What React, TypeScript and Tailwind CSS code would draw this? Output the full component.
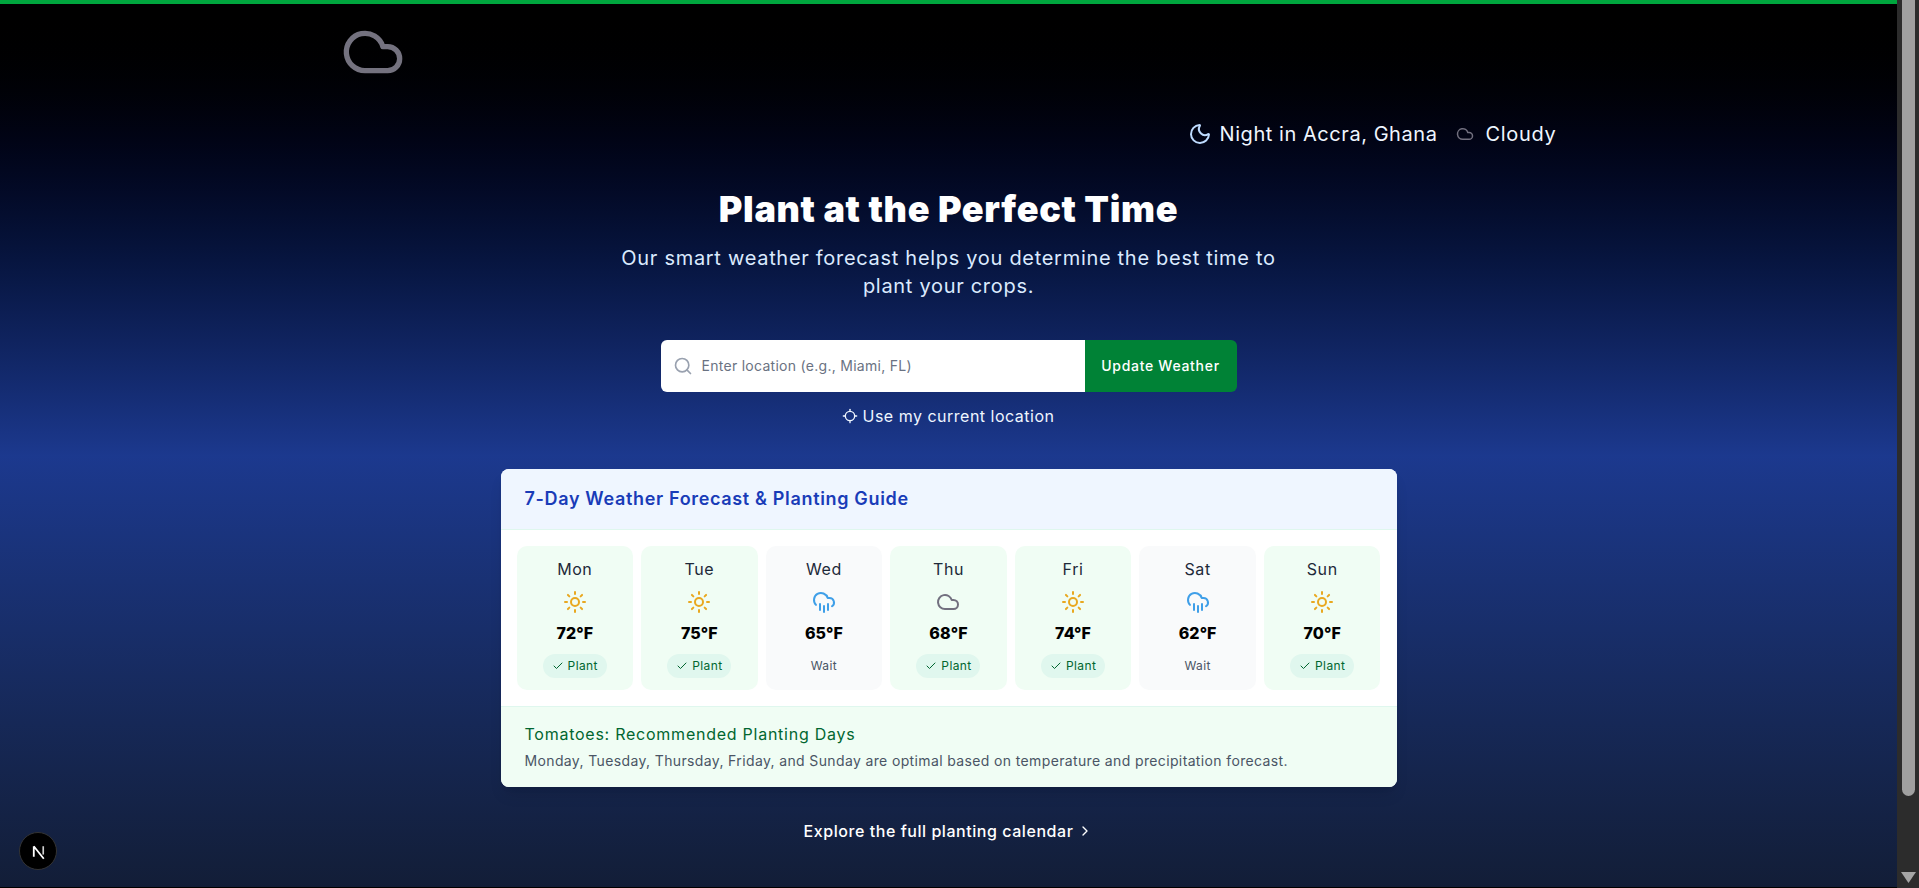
import { Check, ChevronRight, Cloud, CloudRain, Locate, Moon, Search, Sun } from "lucide-react";

const days = [
  { name: "Mon", temp: "72°F", icon: "sun", plant: true },
  { name: "Tue", temp: "75°F", icon: "sun", plant: true },
  { name: "Wed", temp: "65°F", icon: "rain", plant: false },
  { name: "Thu", temp: "68°F", icon: "cloud", plant: true },
  { name: "Fri", temp: "74°F", icon: "sun", plant: true },
  { name: "Sat", temp: "62°F", icon: "rain", plant: false },
  { name: "Sun", temp: "70°F", icon: "sun", plant: true },
];

const DayIcon = ({ icon }: { icon: string }) => {
  if (icon === "sun") return <Sun className="size-6 text-[#e9a820]" />;
  if (icon === "rain") return <CloudRain className="size-6 text-[#3f9fe8]" />;
  return <Cloud className="size-6 text-[#72707f]" />;
};

const DayCard = ({ day }: { day: (typeof days)[number] }) => (
  <div className={`flex flex-col items-center rounded-[10px] px-3 pt-[11px] pb-3 ${day.plant ? "bg-green-50" : "bg-gray-50"}`}>
    <span className="text-base leading-6 tracking-[0.6px] text-gray-800">{day.name}</span>
    <div className="mt-[9px]">
      <DayIcon icon={day.icon} />
    </div>
    <span className="mt-[7px] text-base leading-6 font-extrabold tracking-[0.1px] text-black">{day.temp}</span>
    {day.plant ? (
      <span className="mt-[9px] flex h-6 w-16 items-center justify-center gap-1 rounded-full bg-[#e0f7ee] text-xs tracking-[0.4px] text-green-800">
        <Check className="size-3" />
        Plant
      </span>
    ) : (
      <span className="mt-[9px] flex h-6 items-center rounded-full bg-gray-50 px-2 text-xs tracking-[0.4px] text-gray-600">
        Wait
      </span>
    )}
  </div>
);

const NextBadge = () => (
  <div className="absolute bottom-[18px] left-[19px] flex size-[38px] items-center justify-center rounded-full border border-[#333] bg-black">
    <svg viewBox="0 0 180 180" className="size-[25px]" fill="none">
      <path d="M56 52V128M56 52L128 142" stroke="white" strokeWidth="13" />
      <path d="M124 52V112" stroke="#cfcfcf" strokeWidth="12" />
    </svg>
  </div>
);

export default function App() {
  return (
    <div className="flex h-[888px] overflow-hidden font-['Inter',sans-serif]">
      <div className="relative flex-1 overflow-hidden">
        <div className="flex h-[970px] flex-col bg-linear-to-b from-black via-blue-900 via-[47%] to-gray-900">
          <div className="h-1 bg-green-600" />
          <div className="mx-auto w-full max-w-7xl px-8 py-4">
            <Cloud className="size-16 text-[#74727f]" />
          </div>
          <div className="mx-auto mt-5 flex w-full max-w-7xl items-center justify-end px-8 text-xl leading-7 text-blue-50">
            <Moon className="size-6 text-blue-200" />
            <span className="ml-2 tracking-[0.55px]">Night in Accra, Ghana</span>
            <Cloud className="ml-[19px] size-[18px] text-[#72707f]" />
            <span className="ml-[11px] tracking-[0.7px]">Cloudy</span>
          </div>
          <div className="mt-[41px] flex flex-col items-center">
            <h1 className="text-4xl leading-10 font-black tracking-[0.65px] text-white">Plant at the Perfect Time</h1>
            <p className="mt-[15px] w-[672px] text-center text-xl leading-7 tracking-[0.7px] text-blue-100">
              Our smart weather forecast helps you determine the best time to plant your crops.
            </p>
            <div className="mt-10 flex h-[52px] w-[576px] overflow-hidden rounded-md">
              <div className="flex flex-1 items-center bg-white pl-3">
                <Search className="size-5 text-gray-400" />
                <span className="ml-[9px] text-sm tracking-[0.28px] text-gray-500">Enter location (e.g., Miami, FL)</span>
              </div>
              <button className="w-[152px] bg-green-700 text-sm font-medium tracking-[0.7px] text-white">Update Weather</button>
            </div>
            <div className="mt-3 flex items-center gap-1 text-base leading-6 tracking-[0.5px] text-blue-50">
              <Locate className="size-4" />
              Use my current location
            </div>
          </div>
          <div className="mx-auto mt-[41px] w-[896px] overflow-hidden rounded-lg bg-white shadow-lg">
            <div className="border-b border-[#dff7ee] bg-blue-50 px-6 py-4 text-lg leading-7 font-semibold tracking-[0.66px] text-blue-800">
              7-Day Weather Forecast &amp; Planting Guide
            </div>
            <div className="grid grid-cols-7 gap-2 p-4">
              {days.map((day) => (
                <DayCard key={day.name} day={day} />
              ))}
            </div>
            <div className="border-t border-[#dff7ee] bg-green-50 px-6 pt-[15px] pb-4">
              <div className="text-base leading-6 tracking-[0.75px] text-green-800">Tomatoes: Recommended Planting Days</div>
              <div className="mt-[5px] text-sm leading-5 tracking-[0.365px] text-gray-600">
                Monday, Tuesday, Thursday, Friday, and Sunday are optimal based on temperature and precipitation forecast.
              </div>
            </div>
          </div>
          <div className="mt-8 flex items-center justify-center gap-1 text-base leading-6 font-medium tracking-[0.55px] text-white">
            Explore the full planting calendar
            <ChevronRight className="size-4" />
          </div>
        </div>
        <NextBadge />
        <div className="absolute inset-x-0 bottom-0 h-px bg-black" />
      </div>
      <div className="flex w-[22px] flex-col items-center bg-[#2c2c2c]">
        <div className="h-[796px] w-[13px] rounded-b-full bg-[#a0a0a0]" />
        <svg viewBox="0 0 15 11" className="mt-[76px] h-[11px] w-[15px]">
          <path d="M0 0H15L7.5 11Z" fill="#a5a5a5" />
        </svg>
      </div>
    </div>
  );
}
